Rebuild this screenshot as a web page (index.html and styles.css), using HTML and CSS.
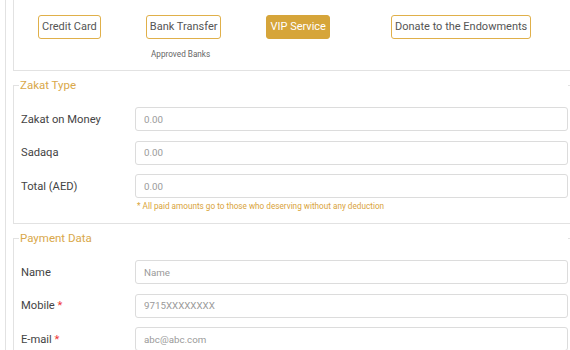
FILE: index.html
```html
<!DOCTYPE html>
<html>
<head>
<meta charset="utf-8">
<link rel="stylesheet" href="styles.css">
</head>
<body>
<div class="page">
  <div class="methods">
    <div class="method-row">
      <div class="method">
        <button class="btn">Credit Card</button>
      </div>
      <div class="method">
        <button class="btn">Bank Transfer</button>
        <span class="sub">Approved Banks</span>
      </div>
      <div class="method">
        <button class="btn btn-active">VIP Service</button>
      </div>
      <div class="method">
        <button class="btn">Donate to the Endowments</button>
      </div>
    </div>
  </div>

  <fieldset class="group">
    <legend class="group-title">Zakat Type</legend>
    <div class="row">
      <label class="label">Zakat on Money</label>
      <input class="field" type="text" placeholder="0.00">
    </div>
    <div class="row">
      <label class="label">Sadaqa</label>
      <input class="field" type="text" placeholder="0.00">
    </div>
    <div class="row row-last">
      <label class="label">Total (AED)</label>
      <input class="field" type="text" placeholder="0.00">
    </div>
    <p class="note">* All paid amounts go to those who deserving without any deduction</p>
  </fieldset>

  <fieldset class="group group-payment">
    <legend class="group-title">Payment Data</legend>
    <div class="row">
      <label class="label">Name</label>
      <input class="field" type="text" placeholder="Name">
    </div>
    <div class="row">
      <label class="label">Mobile <span class="req">*</span></label>
      <input class="field" type="text" placeholder="9715XXXXXXXX">
    </div>
    <div class="row">
      <label class="label">E-mail <span class="req">*</span></label>
      <input class="field" type="text" placeholder="abc@abc.com">
    </div>
  </fieldset>
</div>
</body>
</html>
```

FILE: styles.css
```css
html, body {
  margin: 0;
  padding: 0;
  background: #fff;
  overflow: hidden;
}
body {
  font-family: Roboto, "Liberation Sans", sans-serif;
  color: #444;
}
.page {
  margin-left: 5px;
  border-left: 1px solid #e2e2e2;
  padding-left: 7px;
  width: 562px;
  height: 350px;
  overflow: hidden;
}
.methods {
  border: 1px solid #e2e2e2;
  border-top: none;
  height: 71px;
  box-sizing: border-box;
  padding: 15px 0 0 24px;
}
.method-row {
  display: flex;
  align-items: flex-start;
}
.method {
  display: flex;
  flex-direction: column;
  align-items: center;
}
.method:nth-child(1) { margin-right: 45px; }
.method:nth-child(2) { margin-right: 45px; }
.method:nth-child(3) { margin-right: 61px; }
.btn {
  font-family: Roboto, "Liberation Sans", sans-serif;
  font-size: 11px;
  color: #555;
  background: #fff;
  border: 1px solid #e0b04a;
  border-radius: 3px;
  height: 24px;
  padding: 0 3px;
  line-height: 22px;
}
.btn-active {
  background: #d6a53a;
  border-color: #d6a53a;
  color: #fff;
}
.sub {
  font-size: 8.2px;
  color: #666;
  margin-top: 10px;
  margin-left: -6px;
}
.group {
  margin: 4px 0 0 0;
  padding: 12px 8px 11px 7px;
  border: 1px solid #e2e2e2;
  width: 562px;
  box-sizing: border-box;
}
.group-payment {
  padding-top: 12px;
}
.group-title {
  width: 549px;
  box-sizing: border-box;
  margin-left: -2px;
  padding: 0 0 0 1px;
  font-size: 11.5px;
  line-height: 20px;
  color: #d9a84a;
}
.row {
  display: flex;
  align-items: center;
  margin-bottom: 9.5px;
}
.row-last { margin-bottom: 0; }
.label {
  width: 114px;
  font-size: 11.2px;
  color: #444;
}
.req { color: #e33; }
.field {
  flex: 1;
  height: 24px;
  box-sizing: border-box;
  border: 1px solid #dcdcdc;
  border-radius: 3px;
  padding: 0 8px;
  font-family: Roboto, "Liberation Sans", sans-serif;
  font-size: 9.75px;
  color: #555;
}
.field::placeholder { color: #9a9a9a; }
.note {
  margin: 2px 0 0 116px;
  font-size: 8.2px;
  line-height: 12px;
  color: #d9a33a;
}
```
